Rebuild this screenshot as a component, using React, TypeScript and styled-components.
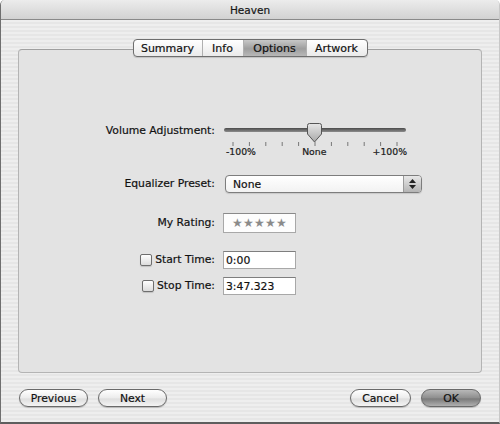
import React from 'react'
import styled, { createGlobalStyle } from 'styled-components'

const GlobalStyle = createGlobalStyle`
  html, body {
    margin: 0;
    padding: 0;
    background: #ffffff;
  }
  body {
    font-family: 'DejaVu Sans', 'Liberation Sans', sans-serif;
    font-size: 10.8px;
    color: #111;
    -webkit-text-stroke: 0.2px #111;
  }
`

const tabs = [
  { name: 'Summary', width: 68 },
  { name: 'Info', width: 41 },
  { name: 'Options', width: 63, active: true },
  { name: 'Artwork', width: 61 },
]

const ticks = Array.from({ length: 11 }, (_, i) => 10 + i * 16.4)

const App = () => {
  return (
    <>
      <GlobalStyle />
      <Window>
        <TitleBar>Heaven</TitleBar>
        <Content>
          <TabBar>
            {tabs.map(({ name, width, active }) => (
              <Tab key={name} $w={width} $active={!!active}>{name}</Tab>
            ))}
          </TabBar>
          <Panel>
            <Row $top={0} $align="start">
              <Label $top={2}>Volume Adjustment:</Label>
              <Slider>
                <svg width="184" height="24" viewBox="0 0 184 24">
                  <defs>
                    <linearGradient id="track" x1="0" y1="0" x2="0" y2="1">
                      <stop offset="0" stopColor="#4a4a4a" />
                      <stop offset="1" stopColor="#8c8c8c" />
                    </linearGradient>
                    <linearGradient id="thumb" x1="0" y1="0" x2="0" y2="1">
                      <stop offset="0" stopColor="#e6e6e6" />
                      <stop offset="1" stopColor="#a9a9a9" />
                    </linearGradient>
                  </defs>
                  <rect x="1" y="6" width="182" height="4" rx="2" fill="url(#track)" />
                  {ticks.map((x) => (
                    <line key={x} x1={x} y1="20" x2={x} y2="24" stroke="#777" strokeWidth="1" />
                  ))}
                  <path
                    d="M86.5 1.5 h10 a2 2 0 0 1 2 2 v8.5 l-7 8 l-7 -8 v-8.5 a2 2 0 0 1 2 -2 z"
                    fill="url(#thumb)"
                    stroke="#555"
                    strokeWidth="1"
                  />
                </svg>
                <SliderLabels>
                  <span>-100%</span>
                  <span>None</span>
                  <span>+100%</span>
                </SliderLabels>
              </Slider>
            </Row>
            <Row $top={18}>
              <Label>Equalizer Preset:</Label>
              <Popup>
                <PopupValue>None</PopupValue>
                <Stepper>
                  <svg width="7" height="10" viewBox="0 0 7 10">
                    <path d="M3.5 0 L7 4 H0 Z" fill="#222" />
                    <path d="M0 6 H7 L3.5 10 Z" fill="#222" />
                  </svg>
                </Stepper>
              </Popup>
            </Row>
            <Row $top={20}>
              <Label>My Rating:</Label>
              <RatingBox>★★★★★</RatingBox>
            </Row>
            <Row $top={18}>
              <Label>
                <Checkbox />
                Start Time:
              </Label>
              <Field>0:00</Field>
            </Row>
            <Row $top={8}>
              <Label>
                <Checkbox />
                Stop Time:
              </Label>
              <Field>3:47.323</Field>
            </Row>
          </Panel>
          <ButtonBar>
            <ButtonGroup>
              <Button $w={69}>Previous</Button>
              <Button $w={69}>Next</Button>
            </ButtonGroup>
            <ButtonGroup>
              <Button $w={61}>Cancel</Button>
              <Button $w={60} $primary>OK</Button>
            </ButtonGroup>
          </ButtonBar>
        </Content>
      </Window>
    </>
  )
}
export default App

const Window = styled.div`
  width: 500px;
  height: 424px;
  box-sizing: border-box;
  display: flex;
  flex-direction: column;
  border: 1px solid #6f6f6f;
  border-top: none;
  border-right-color: #c8c8c8;
  border-bottom: 2px solid #5e5e5e;
  border-radius: 5px 5px 0 0;
  overflow: hidden;
  background: repeating-linear-gradient(#eeeeee 0 2px, #e6e6e6 2px 4px);
`

const TitleBar = styled.div`
  height: 20px;
  box-sizing: border-box;
  display: flex;
  align-items: center;
  justify-content: center;
  font-size: 10.5px;
  color: #1a1a1a;
  background: linear-gradient(#ececec, #d2d2d2);
  border-bottom: 1px solid #8a8a8a;
`

const Content = styled.div`
  flex: 1;
  display: flex;
  flex-direction: column;
  align-items: center;
  padding: 19px 17px 0 17px;
`

const TabBar = styled.div`
  position: relative;
  z-index: 1;
  display: flex;
  height: 18px;
  box-sizing: border-box;
  border: 1px solid #6e6e6e;
  border-radius: 4px;
  overflow: hidden;
  background: linear-gradient(#ffffff, #eaeaea);
  box-shadow: 0 1px 1px rgba(0, 0, 0, 0.15);
`

const Tab = styled.div<{ $w: number; $active: boolean }>`
  width: ${(p) => p.$w}px;
  box-sizing: border-box;
  display: flex;
  align-items: center;
  justify-content: center;
  font-size: 11px;
  border-left: 1px solid #b0b0b0;
  background: ${(p) => (p.$active ? 'linear-gradient(#c8c8c8, #9e9e9e 55%, #b8b8b8)' : 'transparent')};
  &:first-child {
    border-left: none;
  }
`

const Panel = styled.div`
  align-self: stretch;
  height: 324px;
  box-sizing: border-box;
  margin-top: -8px;
  padding-top: 72px;
  display: flex;
  flex-direction: column;
  background: #e3e3e3;
  border: 1px solid #b4b4b4;
  border-top-color: #a0a0a0;
  border-radius: 4px;
`

const Row = styled.div<{ $top: number; $align?: string }>`
  display: grid;
  grid-template-columns: 196px auto;
  column-gap: 8px;
  align-items: ${(p) => p.$align || 'center'};
  margin-top: ${(p) => p.$top}px;
`

const Label = styled.div<{ $top?: number }>`
  display: flex;
  align-items: center;
  justify-content: flex-end;
  gap: 3px;
  line-height: 14px;
  margin-top: ${(p) => p.$top || 0}px;
  white-space: nowrap;
`

const Slider = styled.div`
  width: 184px;
  display: flex;
  flex-direction: column;
`

const SliderLabels = styled.div`
  display: flex;
  justify-content: space-between;
  padding: 0 0 0 3px;
  font-size: 9.3px;
  line-height: 11px;
  color: #222;
`

const Popup = styled.div`
  margin-left: 2px;
  width: 197px;
  height: 18px;
  box-sizing: border-box;
  display: flex;
  border: 1px solid #7d7d7d;
  border-radius: 4px;
  overflow: hidden;
  background: linear-gradient(#ffffff, #f2f2f2);
  box-shadow: 0 1px 1px rgba(0, 0, 0, 0.12);
`

const PopupValue = styled.div`
  flex: 1;
  display: flex;
  align-items: center;
  padding-left: 7px;
`

const Stepper = styled.div`
  width: 17px;
  display: flex;
  align-items: center;
  justify-content: center;
  border-left: 1px solid #9a9a9a;
  background: linear-gradient(#e8e8e8, #b4b4b4);
`

const RatingBox = styled.div`
  width: 73px;
  height: 20px;
  box-sizing: border-box;
  display: flex;
  align-items: center;
  justify-content: center;
  background: #fdfdfd;
  border: 1px solid #a8a8a8;
  border-top-color: #8a8a8a;
  color: #8a8a8a;
  -webkit-text-stroke: 0;
  font-size: 12px;
  letter-spacing: 0.2px;
`

const Field = styled.div`
  width: 73px;
  height: 18px;
  box-sizing: border-box;
  display: flex;
  align-items: center;
  padding-left: 2px;
  background: #ffffff;
  border: 1px solid #a8a8a8;
  border-top-color: #7e7e7e;
`

const Checkbox = styled.span`
  width: 12px;
  height: 12px;
  box-sizing: border-box;
  border: 1px solid #6e6e6e;
  border-radius: 2px;
  background: linear-gradient(#ffffff, #dcdcdc);
  box-shadow: 0 1px 1px rgba(0, 0, 0, 0.15);
`

const ButtonBar = styled.div`
  align-self: stretch;
  margin-top: 16px;
  padding: 0 1px;
  display: flex;
  justify-content: space-between;
`

const ButtonGroup = styled.div`
  display: flex;
  gap: 10px;
`

const Button = styled.div<{ $w: number; $primary?: boolean }>`
  width: ${(p) => p.$w}px;
  height: 18px;
  box-sizing: border-box;
  display: flex;
  align-items: center;
  justify-content: center;
  border: 1px solid #6a6a6a;
  border-radius: 9px;
  background: ${(p) =>
    p.$primary
      ? 'linear-gradient(#b8b8b8, #8e8e8e 50%, #7a7a7a 55%, #b0b0b0)'
      : 'linear-gradient(#ffffff, #ececec 50%, #dedede 55%, #f4f4f4)'};
  box-shadow: 0 1px 1px rgba(0, 0, 0, 0.2);
  color: #111;
`
